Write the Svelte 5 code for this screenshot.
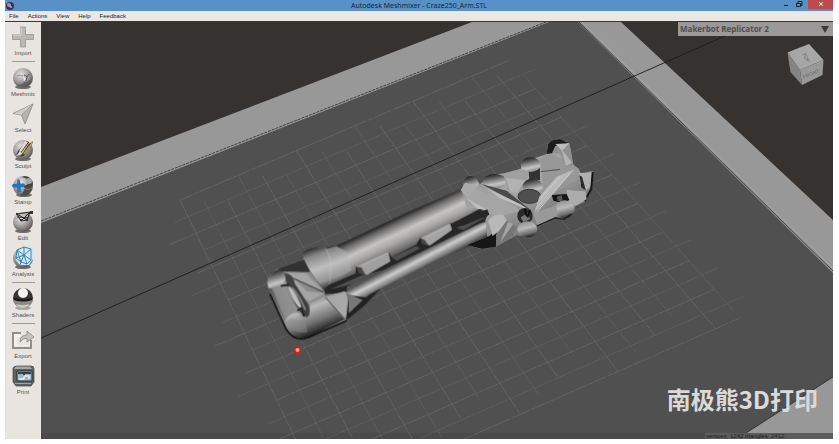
<script lang="ts">
  type Tool = { name: string; icon: string; divider?: boolean };

  const menus = ['File', 'Actions', 'View', 'Help', 'Feedback'];

  const tools: Tool[] = [
    { name: 'Import', icon: 'import', divider: true },
    { name: 'Meshmix', icon: 'meshmix' },
    { name: 'Select', icon: 'select' },
    { name: 'Sculpt', icon: 'sculpt' },
    { name: 'Stamp', icon: 'stamp' },
    { name: 'Edit', icon: 'edit' },
    { name: 'Analysis', icon: 'analysis', divider: true },
    { name: 'Shaders', icon: 'shaders', divider: true },
    { name: 'Export', icon: 'export' },
    { name: 'Print', icon: 'print' },
  ];

  const printers = ['Makerbot Replicator 2'];
  let printer = $state(printers[0]);

  // corners of the print bed grid, in scene units
  const TL = [180, 200], TR = [510, 60], BR = [740, 318], BL = [325, 500];
  const COLS = 17;
  const ROWS = 18;

  function bed(u: number, v: number) {
    const at = (i: number) =>
      (1 - v) * ((1 - u) * TL[i] + u * TR[i]) + v * ((1 - u) * BL[i] + u * BR[i]);
    return [at(0), at(1)];
  }

  function gridLine(u1: number, v1: number, u2: number, v2: number) {
    const [x1, y1] = bed(u1, v1);
    const [x2, y2] = bed(u2, v2);
    return { x1, y1, x2, y2 };
  }

  // the grid has ragged ends, every line stops somewhere else
  const gridLines = [
    ...Array.from({ length: COLS + 1 }, (_, i) => gridLine(i / COLS, (i % 3) * 0.03, i / COLS, 1 - (i % 4) * 0.03)),
    ...Array.from({ length: ROWS + 1 }, (_, i) => gridLine(-(i % 3) * 0.04, i / ROWS, 1 + (i % 2) * 0.04, i / ROWS)),
  ];
</script>

<div class="window">
  <header class="titlebar">
    <svg class="logo" viewBox="0 0 10 10" aria-hidden="true">
      <circle cx="5" cy="5" r="4" fill="#39304f" />
      <circle cx="4" cy="4" r="2" fill="#a596ad" />
      <circle cx="6" cy="6" r="1" fill="#c9b4b4" />
    </svg>
    <h1>Autodesk Meshmixer - Craze250_Arm.STL</h1>
    <div class="controls">
      <button aria-label="Minimize"><svg viewBox="0 0 8 8"><path d="M2 5.5h4" stroke="#122" stroke-width="1" /></svg></button>
      <button aria-label="Restore"><svg viewBox="0 0 8 8"><path d="M1.5 3.5h4v3h-4zM3 3V1.5h4v4H6" fill="none" stroke="#122" /></svg></button>
      <button class="close" aria-label="Close"><svg viewBox="0 0 8 8"><path d="M2 2l4 4M6 2l-4 4" stroke="#fff" stroke-width="1" /></svg></button>
    </div>
  </header>

  <nav class="menubar">
    {#each menus as menu}
      <button>{menu}</button>
    {/each}
  </nav>

  <div class="workspace">
    <aside class="toolbar">
      {#each tools as tool}
        <button class="tool">
          <svg viewBox="0 0 24 24" aria-hidden="true">
            <defs>
              <radialGradient id="ball-{tool.icon}" cx="0.4" cy="0.32" r="0.68">
                <stop offset="0" stop-color="#e4e3e1" />
                <stop offset="0.5" stop-color="#aaa7a5" />
                <stop offset="1" stop-color="#5c5957" />
              </radialGradient>
            </defs>
            {#if ['meshmix', 'sculpt', 'edit', 'analysis'].includes(tool.icon)}
              <ellipse cx="12" cy="21" rx="8" ry="2" fill="#716e6b" />
              <circle cx="12" cy="12" r="10" fill="url(#ball-{tool.icon})" />
            {/if}
            {#if tool.icon === 'import'}
              <path d="M9.500 2h5v7.500h8v5h-8v7.500h-5v-7.500h-8v-5h8z" fill="#bab8b5" stroke="#969491" stroke-width="0.8" />
              <path d="M10 2.500v7.500H2" fill="none" stroke="#dddbd8" />
            {:else if tool.icon === 'meshmix'}
              <path d="M13 9q2 0 3 2l2-3M16 11l-1 4" fill="none" stroke="#5b5856" />
              <path d="M6 10q3-2 6 0" fill="none" stroke="#9a9795" />
              <path d="M12 10l1 5 2-2z" fill="#eee" />
              <path d="M13 16q5 0 8-4-1 8-9 9-4 0-7-3 5 2 8-2z" fill="#595654" opacity="0.7" />
            {:else if tool.icon === 'select'}
              <path d="M22 2L2 11.500l8.500 1.500L14 22z" fill="#b5b3b1" stroke="#8e8c89" stroke-width="0.9" />
              <path d="M22 2L10.500 13 3 11.500z" fill="#cecccb" />
              <path d="M22 2L10.500 13" stroke="#888" stroke-width="0.6" />
            {:else if tool.icon === 'sculpt'}
              <path d="M15 3l3 1-8 11-5 3 2-5z" fill="#33302e" />
              <path d="M14 3l3 1-7 10-2-1z" fill="#e8ddcb" />
              <path d="M17 7l5-4-1 3-8 12-5 1 4-4z" fill="#4a4038" />
              <path d="M20 4l1 1-8 11" fill="none" stroke="#c49a55" stroke-width="1.500" />
              <path d="M5 18l4-5 2 3z" fill="#dedede" />
            {:else if tool.icon === 'stamp'}
              <ellipse cx="13" cy="21" rx="8" ry="2" fill="#716e6b" />
              <circle cx="12" cy="12" r="10" fill="url(#ball-stamp)" />
              <path d="M13 2q8 0 9 8-1 5-6 5-4-1-3-4 4 1 4-3t-6-5z" fill="#464442" />
              <path d="M13 15q6 2 8-1-2 8-8 8-3 0-4-1 4-2 4-6z" fill="#4f4c4a" />
              <circle cx="18" cy="7" r="3" fill="#a9a7a5" />
              <path d="M6 6q2-2 3 1 0 2 1 3 3-2 4 1 0 3-4 2-1 1 0 4-2 3-4 0 1-3-1-4-3 2-4-1 0-3 4-2 2-1 1-4z" fill="#2674ba" />
            {:else if tool.icon === 'edit'}
              <path d="M6 4l13-2-3 8-6 1zM6 4l10 6M19 2l-9 9M6 7l12 1" fill="none" stroke="#292725" />
              <path d="M5 3h2v2H5zM19 1h3v3h-3zM9 9h2v2H9zM15 9h2v2h-2z" fill="#373432" />
            {:else if tool.icon === 'analysis'}
              <path d="M6 4L13 1h9v12l-4 6-9 0-4-5z" fill="#d6e6ef" />
              <path d="M6 4l7 5 7-6M13 9l7 5 0-11-7-2-7 3-1 8 8-3-3 7 6 2 4-4M5 12l5 4-1 3M13 9l3 9M6 4l4 12M13 1v8" fill="none" stroke="#3285b9" stroke-width="1" />
            {:else if tool.icon === 'shaders'}
              <ellipse cx="12" cy="21" rx="8" ry="2" fill="#aaa8a5" />
              <circle cx="12" cy="11" r="10" fill="#383533" />
              <path d="M2 12q10 4 20 0-1 8-10 9-9-1-10-9z" fill="#8e8986" />
              <path d="M5 17q7 2 14 0-3 4-7 4-5 0-7-4z" fill="#cbc7c2" />
              <ellipse cx="12" cy="6" rx="5" ry="5" fill="#f4f4f4" />
              <path d="M3 12q9 3 18 0" fill="none" stroke="#191715" stroke-width="2" />
            {:else if tool.icon === 'export'}
              <path d="M10 5H2v15h18v-8" fill="none" stroke="#92908d" stroke-width="2" />
              <path d="M3 6h6v3h-3v8h12v1H3z" fill="#f3f2ef" />
              <path d="M9 14q0-7 7-7V3l7 6-7 5v-4q-4 0-7 4z" fill="#c5c3c0" stroke="#888683" stroke-width="0.8" />
            {:else}
              <path d="M2 4q1-2 4-2h14q3 0 3 3v13l-3 4H5l-3-4z" fill="#5f605f" stroke="#444" stroke-width="0.7" />
              <path d="M3 5h18l-2-2.500H5z" fill="#a7a7a5" />
              <path d="M6 7h15v10H6z" fill="#9db8c8" stroke="#2f3032" />
              <path d="M7 8h13v2H7zM12 10h2v3h-2z" fill="#34434e" />
              <path d="M8 15h5v-3h5v3" fill="none" stroke="#e8f3f6" stroke-width="1.500" />
              <path d="M4 19.500h16" stroke="#a3a3a1" />
            {/if}
          </svg>
          <span>{tool.name}</span>
        </button>
        {#if tool.divider}
          <hr />
        {/if}
      {/each}
    </aside>

    <main class="viewport">
      <svg class="scene" viewBox="41 22 792 417" preserveAspectRatio="xMidYMid slice" role="img" aria-label="Arm model on print bed">
        <defs>
          <!-- rounds off the facets of the mesh -->
          <filter id="smooth" x="-5%" y="-5%" width="110%" height="110%">
            <feGaussianBlur stdDeviation="1.800" />
          </filter>
          <linearGradient id="tubeBig" gradientUnits="userSpaceOnUse" x1="400" y1="12" x2="447" y2="112">
            <stop offset="0" stop-color="#252525" />
            <stop offset="0.14" stop-color="#686868" />
            <stop offset="0.4" stop-color="#c8c6c5" />
            <stop offset="0.6" stop-color="#a8a7a6" />
            <stop offset="0.85" stop-color="#696969" />
            <stop offset="1" stop-color="#222" />
          </linearGradient>
          <linearGradient id="tubeSmall" gradientUnits="userSpaceOnUse" x1="520" y1="92" x2="546" y2="142">
            <stop offset="0" stop-color="#555" />
            <stop offset="0.35" stop-color="#cecece" />
            <stop offset="0.65" stop-color="#858585" />
            <stop offset="1" stop-color="#171717" />
          </linearGradient>
          <linearGradient id="elbow" gradientUnits="userSpaceOnUse" x1="180" y1="225" x2="225" y2="338">
            <stop offset="0" stop-color="#747474" />
            <stop offset="0.3" stop-color="#b9b9b9" />
            <stop offset="0.65" stop-color="#737373" />
            <stop offset="1" stop-color="#0c0c0c" />
          </linearGradient>
          <linearGradient id="leftSide" gradientUnits="userSpaceOnUse" x1="62" y1="230" x2="150" y2="195">
            <stop offset="0" stop-color="#303030" />
            <stop offset="0.18" stop-color="#8a8a8a" />
            <stop offset="1" stop-color="#9b9b9b" />
          </linearGradient>
          <linearGradient id="collar" gradientUnits="userSpaceOnUse" x1="195" y1="78" x2="240" y2="205">
            <stop offset="0" stop-color="#252525" />
            <stop offset="0.2" stop-color="#888" />
            <stop offset="0.5" stop-color="#c0c0c0" />
            <stop offset="0.8" stop-color="#959595" />
            <stop offset="1" stop-color="#262626" />
          </linearGradient>
          <linearGradient id="plate" x1="0" y1="0" x2="0.7" y2="1">
            <stop offset="0" stop-color="#808080" />
            <stop offset="0.5" stop-color="#a8a8a8" />
            <stop offset="1" stop-color="#606060" />
          </linearGradient>
          <linearGradient id="knob" x1="0.3" y1="0" x2="0.6" y2="1">
            <stop offset="0" stop-color="#161616" />
            <stop offset="0.35" stop-color="#6d6d6d" />
            <stop offset="0.7" stop-color="#c4c4c4" />
            <stop offset="1" stop-color="#858585" />
          </linearGradient>
          <linearGradient id="knobLow" x1="0.35" y1="0" x2="0.65" y2="1">
            <stop offset="0" stop-color="#909090" />
            <stop offset="0.4" stop-color="#bababa" />
            <stop offset="0.75" stop-color="#6f6f6f" />
            <stop offset="1" stop-color="#151515" />
          </linearGradient>
        </defs>

        <rect x="41" y="22" width="792" height="417" fill="#353230" />
        <path d="M41 187L472 22H621L833 220V439H41z" fill="#989898" />
        <path d="M41 223L549 22H578L833 273V377L746 433H41z" fill="#505050" />
        <path d="M41 433H746L740 439H41z" fill="#4a4a4a" />
        <path d="M41 221L546 22" stroke="#282828" stroke-width="0.8" stroke-dasharray="3 1" />
        <path d="M579 22L833 271" stroke="#2c2c2c" stroke-width="0.8" fill="none" />
        <path d="M582 22L833 268" stroke="#b0b0b0" stroke-width="0.6" fill="none" />
        <path d="M833 377L746 433" stroke="#292929" stroke-width="0.8" />

        <g stroke="#707070" stroke-width="0.6" stroke-dasharray="14 1 5 1">
          {#each gridLines as line, i}
            <line {...line} opacity={i % 2 ? 0.7 : 1} />
          {/each}
        </g>
        <path d="M41 338L725 36" stroke="#1c1c1c" stroke-width="0.9" />

        <!-- the arm, drawn at three times the scene scale -->
        <g transform="translate(250 220) scale(0.33333)" filter="url(#smooth)">
          <!-- slot between the two tubes -->
          <path d="M220 195L700 -45 735 5 640 55 300 222 225 220z" fill="#262626" />
          <path d="M240 208L330 168 400 150 315 190z" fill="#505050" />
          <path d="M425 112L500 78 510 85 440 122z" fill="#505050" />
          <path d="M620 24L695 -12 705 -8 640 30z" fill="#505050" />
          <!-- main tube -->
          <path d="M230 82L262 76 470 -22 635 -94 668 -90 720 -10 690 -34 606 10 600 8 512 52 500 73 425 112 415 94 318 138 318 160 238 194 210 190z" fill="url(#tubeBig)" />
          <path d="M318 160L318 138 325 140 330 158zM500 73L510 54 524 72z" fill="#202020" />
          <!-- tabs -->
          <path d="M318 138L415 94 421 124 352 164 330 160z" fill="#a0a0a0" />
          <path d="M318 140L334 142 346 164 325 160z" fill="#454545" />
          <path d="M338 136L412 100" stroke="#b4b4b4" stroke-width="3" />
          <path d="M512 52L600 8 606 30 540 76 518 70z" fill="#a3a3a3" />
          <path d="M510 54L524 60 536 77 515 72z" fill="#464646" />
          <path d="M530 52L598 18" stroke="#b8b8b8" stroke-width="3" />
          <!-- second tube -->
          <path d="M290 200L350 174 545 80 690 10 730 -2 745 45 650 82 550 125 355 224 340 240 290 270z" fill="url(#tubeSmall)" />
          <!-- upper collar -->
          <path d="M158 98Q170 84 200 82L235 84 258 78 290 96 305 150 238 194 222 208 195 175 160 122z" fill="url(#collar)" />
          <path d="M228 86Q252 130 238 192" fill="none" stroke="#d0d0d0" stroke-width="3" opacity="0.4" />
          <path d="M161 106Q172 160 222 208L205 195 175 156z" fill="#717171" />
          <!-- end block -->
          <path d="M52 190Q50 164 84 146L162 119 178 150 195 175 222 214 230 240 290 220 330 232 290 300 175 352Q130 364 108 326L74 254z" fill="#8d8d8d" />
          <path d="M84 146L162 119 180 156 92 154z" fill="#303030" />
          <path d="M52 190Q52 158 86 148L110 160 100 195 56 206z" fill="url(#knob)" />
          <path d="M58 206L104 194 122 244 148 278 105 304Q78 258 58 206z" fill="url(#leftSide)" />
          <path d="M112 158L168 160 224 218 180 245 156 232z" fill="#a4a4a4" />
          <path d="M128 172L226 220 172 214z" fill="#8a8a8a" />
          <path d="M130 175L220 216" stroke="#4c4c4c" stroke-width="4" />
          <path d="M104 160Q130 160 134 190L176 255Q186 285 170 292 145 278 126 232 110 200 104 160z" fill="#404040" />
          <path d="M118 198Q140 216 160 276L150 266Q126 240 114 202z" fill="#bdbdbd" />
          <path d="M126 202Q150 230 166 270" fill="none" stroke="#888" stroke-width="5" />
          <path d="M92 198L116 194M142 272L154 264 162 290" fill="none" stroke="#1e1e1e" stroke-width="5" />
          <!-- lower elbow -->
          <path d="M105 302Q124 270 148 280 164 302 178 288L180 250 230 226 286 215 330 240 300 290 175 352Q130 364 108 326z" fill="url(#elbow)" />
          <path d="M105 302Q126 290 168 308L172 336Q136 344 108 316z" fill="#8a8a8a" opacity="0.5" />
          <path d="M60 222L108 326Q124 356 156 357L176 352 290 302" fill="none" stroke="#121212" stroke-width="5" />
          <!-- lower collar -->
          <path d="M226 232L280 214 335 240 355 224 346 246 286 302 262 275z" fill="#777" />
          <path d="M228 232L285 214 300 250 286 296z" fill="#a8a8a8" />
          <path d="M296 226L346 232 392 206 344 256 288 302z" fill="#232323" />
          <path d="M296 222L338 240 296 280z" fill="#777" />
          <path d="M226 232L286 300" stroke="#565656" stroke-width="3" />
        </g>

        <!-- lattice head of the arm -->
        <g transform="translate(400 130) scale(0.33333)" filter="url(#smooth)">
          <path d="M185 182L192 158 208 138 228 146 240 162 275 134 312 130 362 116 372 94 412 82 440 72 444 40 470 27 508 40 520 106 536 116 542 130 572 124 578 150 570 192 555 216 528 228 514 250 490 265 465 262 412 286 400 312 376 322 350 315 288 350 240 356 200 344 262 320 256 270 265 250 250 238 200 232z" fill="url(#plate)" />
          <path d="M200 345L268 318 290 300 288 350 245 356z" fill="#151515" />
          <ellipse cx="212" cy="162" rx="22" ry="24" fill="url(#knob)" />
          <path d="M182 180L196 158 232 166 226 185 204 206z" fill="#aaa" />
          <path d="M232 178L350 232 358 244 290 262 264 250 250 236 196 208z" fill="#a5a5a5" />
          <path d="M200 205L264 240 232 236z" fill="#bdbdbd" />
          <path d="M160 278L262 238 268 254 188 288z" fill="#272727" />
          <ellipse cx="285" cy="154" rx="36" ry="22" fill="url(#knob)" />
          <path d="M244 162L320 182 392 240 300 192z" fill="#4b4b4b" />
          <path d="M262 176L360 222 390 242 300 204z" fill="#c0c0c0" />
          <path d="M310 132L385 118 402 150 376 180 350 190 322 180z" fill="#9f9f9f" />
          <path d="M318 144L376 150 350 190 330 182z" fill="#b2b2b2" />
          <path d="M420 88L444 70 500 90 536 116 530 150 424 210 428 150z" fill="#989898" />
          <path d="M386 120L420 110 420 150 388 148z" fill="#303030" />
          <ellipse cx="392" cy="104" rx="30" ry="22" fill="url(#knob)" />
          <ellipse cx="398" cy="170" rx="30" ry="24" fill="url(#knob)" />
          <ellipse cx="388" cy="199" rx="34" ry="21" fill="#505050" stroke="#333" stroke-width="3" />
          <path d="M422 125L480 118" stroke="#5e5e5e" stroke-width="4" />
          <path d="M524 118L402 250 418 200 470 140z" fill="#b9b9b9" />
          <path d="M524 128L412 262 440 250 466 200z" fill="#858585" />
          <path d="M510 130L404 254M480 140L420 206" stroke="#d0d0d0" stroke-width="3" />
          <path d="M444 70L442 46 466 28 500 34 509 44 520 106 498 112 480 70z" fill="#909090" />
          <path d="M440 72L444 42Q456 26 480 28L506 38 490 44 466 48 456 70z" fill="#1d1d1d" />
          <path d="M466 42L508 40 486 62z" fill="#bcbcbc" />
          <path d="M484 56L516 98 498 108z" fill="#b4b4b4" />
          <path d="M536 128L560 130 578 124 576 166 556 184 540 160z" fill="#b0b0b0" />
          <path d="M538 136L546 140 558 182 544 172z" fill="#2b2b2b" />
          <path d="M578 126L574 176 554 214" fill="none" stroke="#151515" stroke-width="6" />
          <path d="M500 180L556 184 560 208 526 228 500 212z" fill="#acacac" />
          <path d="M455 195L500 192 508 210 490 220 460 212z" fill="#161616" />
          <path d="M470 200L485 196 488 212 474 214z" fill="#555" />
          <ellipse cx="494" cy="238" rx="30" ry="27" fill="url(#knobLow)" />
          <ellipse cx="375" cy="258" rx="23" ry="24" fill="#2a2a2a" />
          <path d="M362 262L384 248 390 268 370 276z" fill="#777" />
          <path d="M374 236L380 258M390 240L382 262" stroke="#0e0e0e" stroke-width="6" />
          <path d="M398 250L470 226 472 258 412 286z" fill="#999" />
          <ellipse cx="382" cy="298" rx="30" ry="24" fill="url(#knobLow)" />
          <path d="M410 288L466 264 492 268 514 252" fill="none" stroke="#1c1c1c" stroke-width="4" />
          <path d="M264 272Q280 250 310 254L320 272 300 300 278 318z" fill="#b8b8b8" />
          <path d="M320 272L350 290 340 316 290 348 288 316z" fill="#767676" />
          <path d="M324 276L340 282 300 338z" fill="#a4a4a4" />
        </g>

        <circle cx="297.500" cy="350.500" r="4.500" fill="#a92f2f" />
        <circle cx="297.500" cy="350" r="2" fill="#f29a90" />

        <!-- view cube -->
        <g>
          <path d="M787.500 52.500L809 44 823.500 60 800 70z" fill="#a7a7a7" />
          <path d="M800 70L823.500 60 822.500 75 802 85z" fill="#999" />
          <path d="M787.500 52.500L800 70 802 85 790.500 72z" fill="#858585" />
          <text transform="translate(802 54) rotate(60)" class="cube-label">TOP</text>
          <text transform="translate(804 79) rotate(-24)" class="cube-label">FRONT</text>
        </g>
      </svg>

      <select class="printer" aria-label="Printer" bind:value={printer}>
        {#each printers as name}
          <option>{name}</option>
        {/each}
      </select>
      <p class="watermark">南极熊3D打印</p>
      <p class="status">vertices: 1242 triangles: 2412</p>
    </main>
  </div>
</div>

<style>
  :global(body) {
    background: #fff;
  }
  .window {
    display: flex;
    flex-direction: column;
    box-sizing: border-box;
    min-height: 100vh;
    padding: 0 6px 5px 5px;
    font-family: "Liberation Sans", Arial, sans-serif;
  }
  button {
    margin: 0;
    padding: 0;
    border: 0;
    background: none;
    font: inherit;
    color: inherit;
  }
  h1, p {
    margin: 0;
  }

  .titlebar {
    display: grid;
    grid-template-columns: 1fr auto 1fr;
    align-items: center;
    height: 11px;
    background: #5891c8;
  }
  .logo {
    width: 10px;
    height: 10px;
  }
  .titlebar h1 {
    font: 400 7px/10px "Noto Sans", sans-serif;
    color: #16253a;
  }
  .controls {
    display: flex;
    align-self: start;
    justify-content: flex-end;
    gap: 5px;
  }
  .controls button {
    display: flex;
    justify-content: center;
    width: 8px;
    height: 9px;
  }
  .controls svg {
    width: 8px;
    height: 8px;
  }
  .controls .close {
    width: 25px;
    background: #bd4a4d;
  }

  .menubar {
    display: flex;
    gap: 9px;
    height: 10px;
    padding-left: 4px;
    border-bottom: 1px solid #3a3836;
    background: #ebe7e3;
    font-size: 6px;
    line-height: 10px;
    color: #222;
  }

  .workspace {
    display: flex;
    flex: 1;
  }
  .toolbar {
    display: flex;
    flex-direction: column;
    flex: none;
    box-sizing: border-box;
    width: 36px;
    padding-top: 3px;
    background: #e8e4e0;
  }
  .tool {
    display: flex;
    flex-direction: column;
    align-items: center;
    height: 36px;
    font-size: 6px;
    line-height: 8px;
    color: #55524f;
  }
  .tool svg {
    width: 24px;
    height: 24px;
  }
  hr {
    width: 23px;
    margin: 0 auto 4px;
    border: 0;
    border-top: 1px solid #9d9a97;
  }

  .viewport {
    position: relative;
    flex: 1;
    overflow: hidden;
  }
  .scene {
    display: block;
    width: 100%;
    height: 100%;
  }
  .cube-label {
    font-size: 5px;
    fill: #666;
  }
  .printer {
    position: absolute;
    top: 0;
    right: 0;
    width: 155px;
    height: 14px;
    padding: 0 2px;
    border: 0;
    border-radius: 0;
    appearance: none;
    background: #9b9a99;
    font: 700 8px/14px "Open Sans", sans-serif;
    color: #504f4e;
  }
  .viewport::after {
    content: "";
    position: absolute;
    top: 4px;
    right: 4px;
    border: 4px solid transparent;
    border-top: 7px solid #3d3c3b;
    border-bottom: 0;
    pointer-events: none;
  }
  .watermark {
    position: absolute;
    right: 15px;
    bottom: 24px;
    font: 700 24px/32px "Noto Sans CJK SC", sans-serif;
    color: #dadada;
  }
  .status {
    position: absolute;
    right: 0;
    bottom: 0;
    box-sizing: border-box;
    width: 128px;
    padding-left: 1px;
    background: #5c5c5c;
    font-size: 6px;
    line-height: 6px;
    color: #222;
  }
</style>
